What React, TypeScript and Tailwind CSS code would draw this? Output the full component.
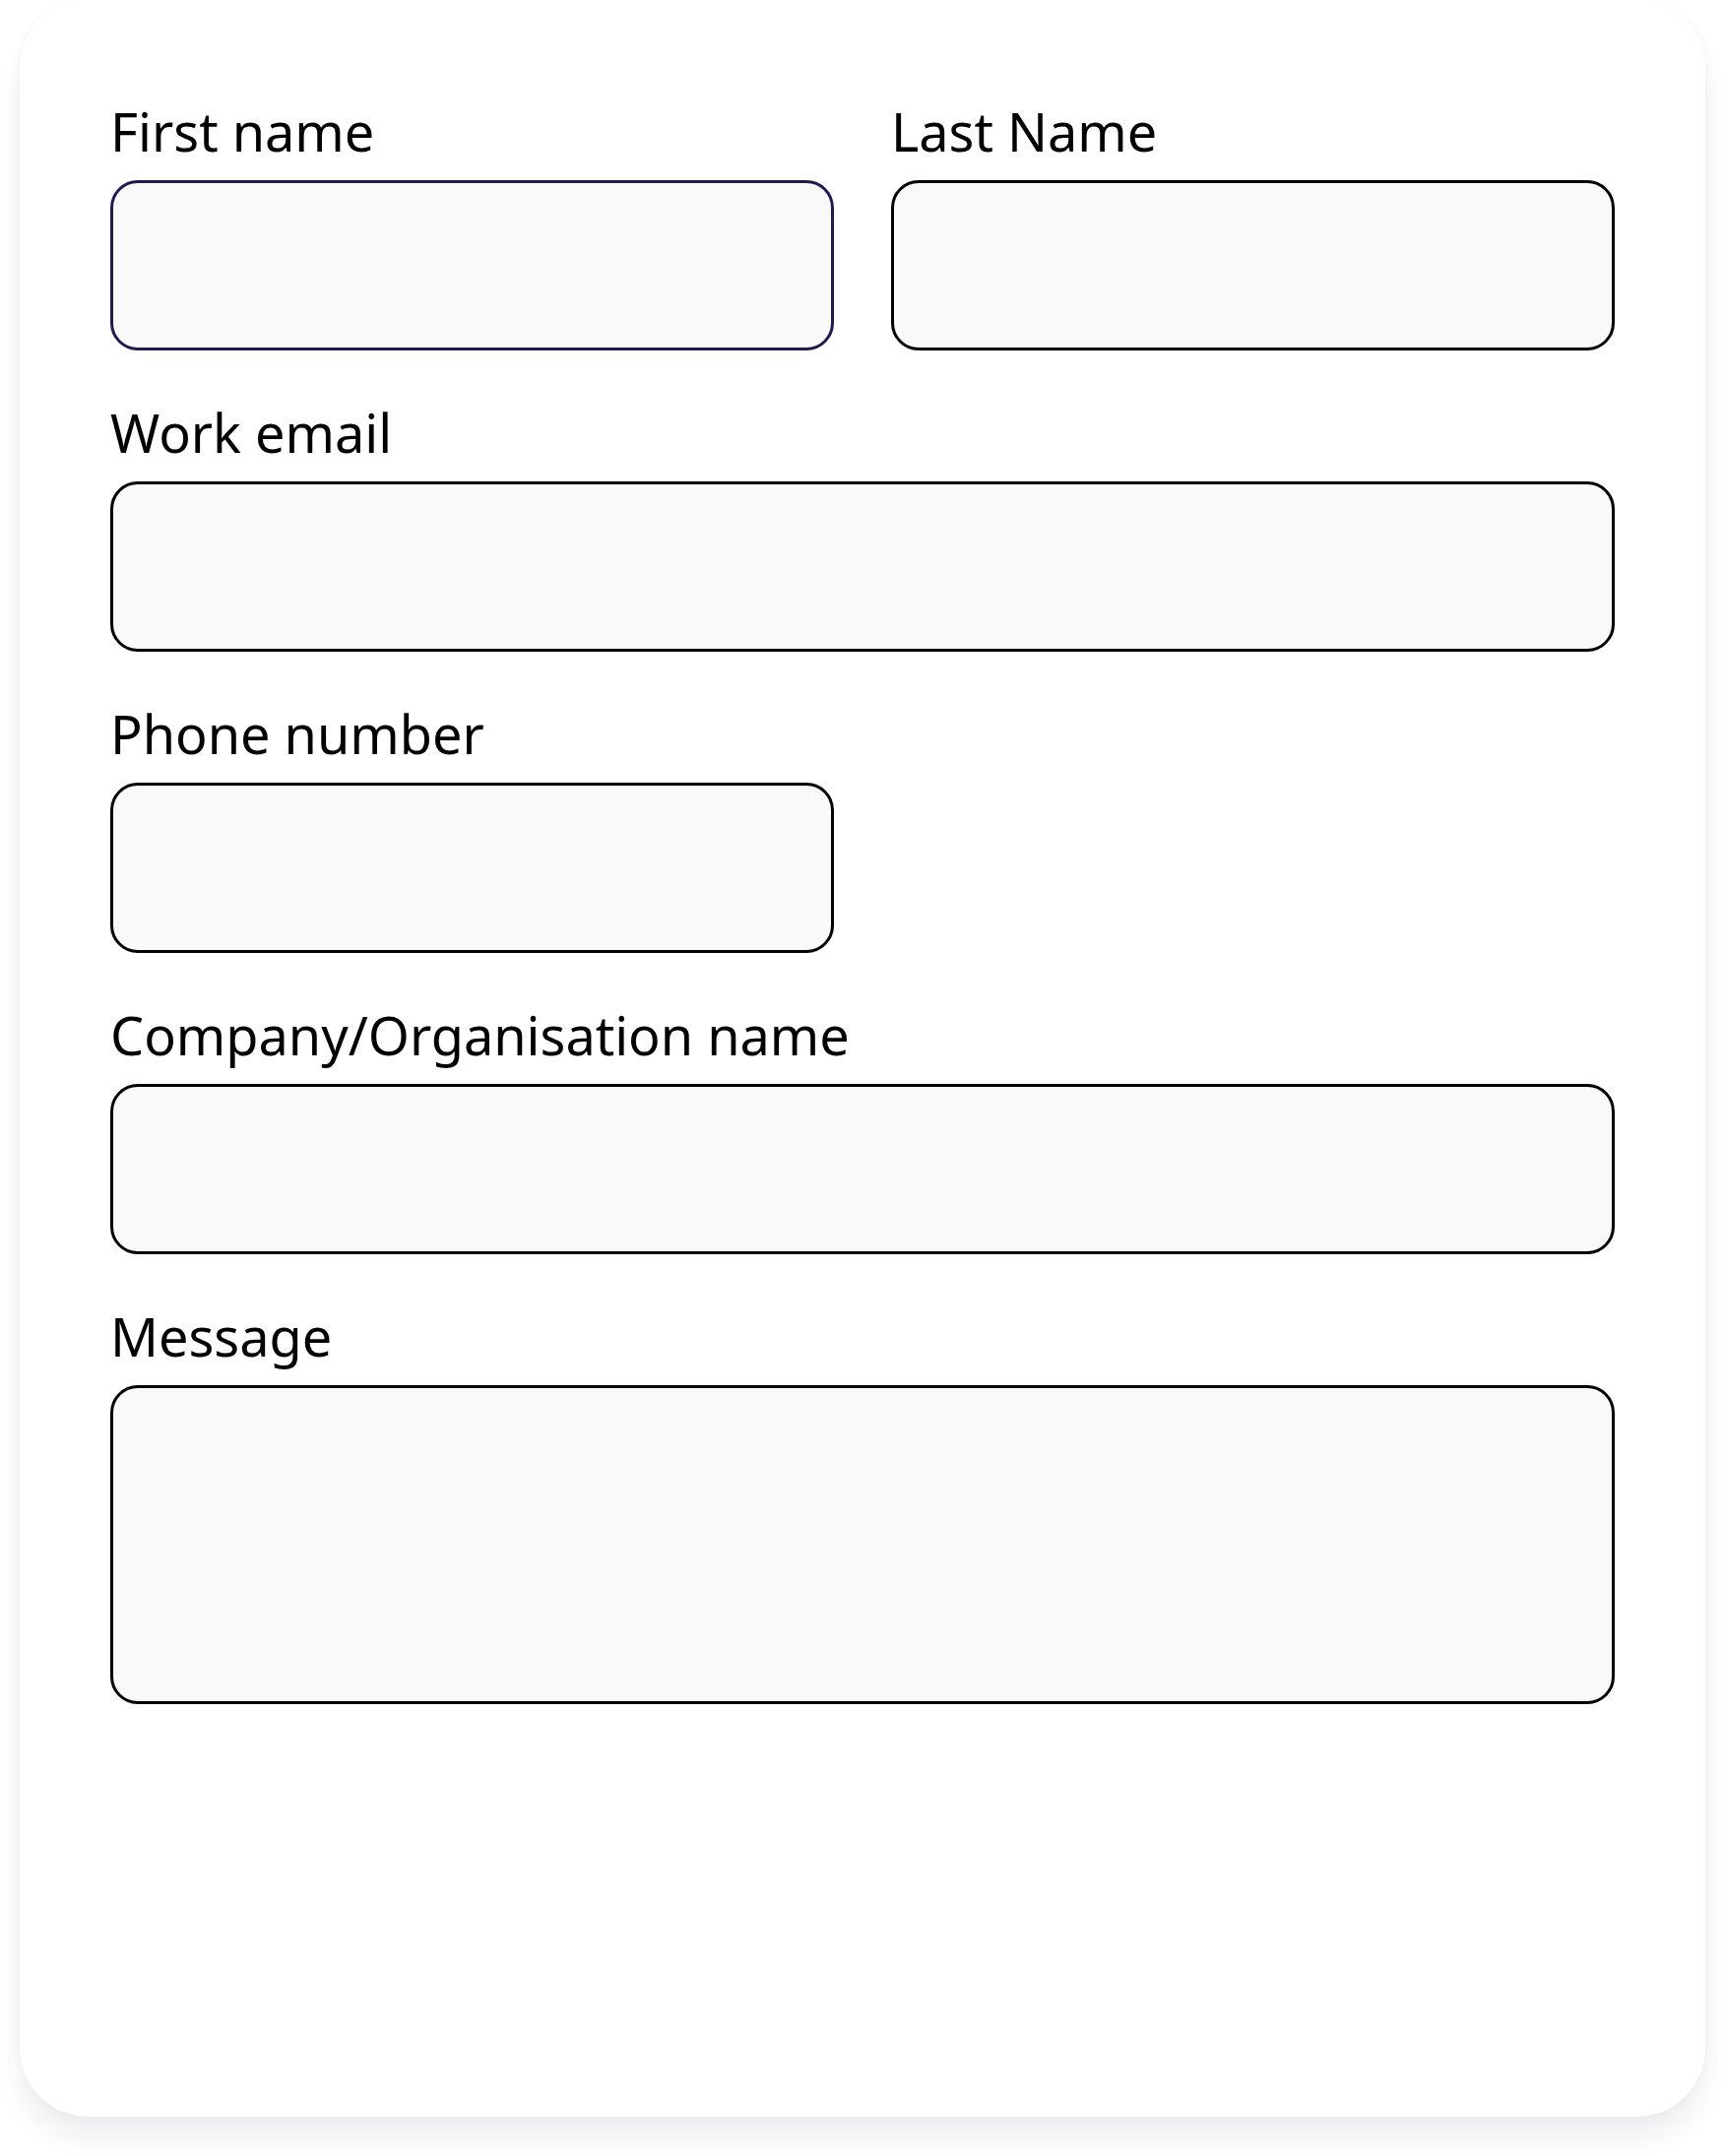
import React from 'react';

interface FieldProps {
  label: string;
  focused?: boolean;
  multiline?: boolean;
  className?: string;
}

const Field: React.FC<FieldProps> = ({ label, focused = false, multiline = false, className = '' }) => {
  const box = `block w-full bg-[#f9f9f9] rounded-[28px] border-[3px] outline-none ${
    focused ? 'border-[#221a4f]' : 'border-black'
  }`;

  return (
    <label className={`flex flex-col ${className}`}>
      <span className="text-[54px] leading-[76px] text-black mb-[12px]">{label}</span>
      {multiline ? (
        <textarea className={`${box} h-[324px] resize-none`} />
      ) : (
        <input type="text" className={`${box} h-[173px]`} />
      )}
    </label>
  );
};

export default function App() {
  return (
    <div className="min-h-screen bg-white px-[20px]" style={{ fontFamily: '"Noto Sans", "Open Sans", sans-serif' }}>
      <form className="w-full bg-white rounded-[70px] shadow-[0_22px_26px_rgba(30,30,70,0.07),0_0_12px_rgba(30,30,70,0.03)] pt-[95px] px-[92px] pb-[419px]">
        <div className="grid grid-cols-2 gap-x-[58px]">
          <Field label="First name" focused />
          <Field label="Last Name" />
        </div>
        <Field label="Work email" className="mt-[45px]" />
        <div className="grid grid-cols-2 gap-x-[58px] mt-[45px]">
          <Field label="Phone number" />
        </div>
        <Field label="Company/Organisation name" className="mt-[45px]" />
        <Field label="Message" multiline className="mt-[45px]" />
      </form>
    </div>
  );
}
